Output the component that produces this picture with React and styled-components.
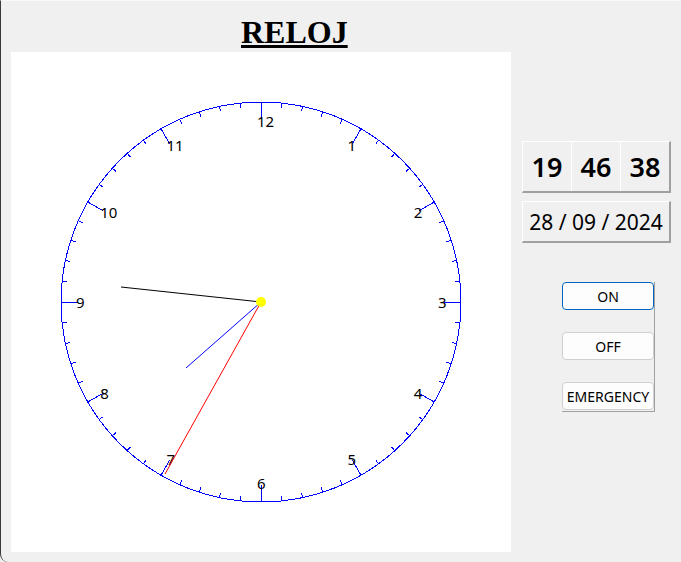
import React from 'react'
import styled, { createGlobalStyle } from 'styled-components'

const GlobalStyle = createGlobalStyle`
  html, body { margin: 0; padding: 0; background: #f0f0f0; }
  body { font-family: "Noto Sans", "Liberation Sans", sans-serif; }
`

const CX = 250
const CY = 250
const R = 200

const ticks = Array.from({ length: 60 }, (_, i) => {
  const a = (i * 6 * Math.PI) / 180
  const len = i % 5 === 0 ? 17 : 5
  const sx = Math.sin(a), cy = -Math.cos(a)
  return {
    x1: CX + R * sx, y1: CY + R * cy,
    x2: CX + (R - len) * sx, y2: CY + (R - len) * cy,
  }
})

const labels = Array.from({ length: 12 }, (_, i) => {
  const n = i + 1
  const a = (n * 30 * Math.PI) / 180
  return { n, x: CX + 181 * Math.sin(a) - 4, y: CY - 181 * Math.cos(a) }
})

// hands read off the reference, relative to centre
const hands = [
  { dx: -140, dy: -15, color: '#000000' },
  { dx: -75, dy: 66, color: '#0000ff' },
  { dx: -96, dy: 172, color: '#ff0000' },
]

const Clock = () => (
  <svg width="500" height="500" viewBox="0 0 500 500" shapeRendering="crispEdges">
    <circle cx={CX} cy={CY} r={R} fill="none" stroke="#0000ff" strokeWidth="1" />
    {ticks.map((t, i) => (
      <line key={i} x1={t.x1} y1={t.y1} x2={t.x2} y2={t.y2} stroke="#0000ff" strokeWidth="1" />
    ))}
    {labels.map(l => (
      <text key={l.n} x={l.x} y={l.y} dominantBaseline="central" fontSize="15"
        fontFamily='"Noto Sans", "Liberation Sans", sans-serif' fill="#000">{l.n}</text>
    ))}
    {hands.map((h, i) => (
      <line key={i} x1={CX} y1={CY} x2={CX + h.dx} y2={CY + h.dy} stroke={h.color} strokeWidth="1" shapeRendering="auto" />
    ))}
    <circle cx={CX} cy={CY} r="5" fill="#ffff00" shapeRendering="auto" />
  </svg>
)

const Window = styled.div`
  width: 681px; height: 562px; box-sizing: border-box;
  border-left: 1px solid #3a3a3a; border-top: 1px solid #f8f8f8;
  border-bottom-left-radius: 8px; border-bottom-right-radius: 8px;
  background: #f0f0f0; overflow: hidden;
  display: flex; padding-left: 10px;
`

const LeftCol = styled.div`
  display: flex; flex-direction: column; width: 500px;
`

const Title = styled.h1`
  margin: 0; box-sizing: border-box; height: 51px; padding: 13px 0 0 230px;
  font-family: "Liberation Serif", serif; font-weight: bold; font-size: 32px; line-height: 36px;
  text-decoration: underline; text-underline-offset: 2px; color: #000;
`

const Canvas = styled.div`
  width: 500px; height: 500px; background: #fff;
`

const Panel = styled.div`
  margin-left: 11px; padding-top: 140px; display: flex; flex-direction: column;
`

const LabelBox = styled.div`
  box-sizing: border-box; width: 149px; height: ${p => p.$h}px;
  border-top: 1px solid #fff; border-left: 1px solid #fff;
  border-bottom: 2px solid #a0a0a0; border-right: 2px solid #a0a0a0;
  display: flex; margin-bottom: ${p => p.$mb || 0}px;
`

const TimeCell = styled.div`
  flex: 1; display: flex; align-items: center; justify-content: center;
  font-size: 27px; font-weight: 600; color: #000;
  & + & { border-left: 1px solid #fff; }
`

const DateText = styled.div`
  flex: 1; display: flex; align-items: center; justify-content: center;
  font-size: 21px; color: #000;
`

const ButtonCol = styled.div`
  margin: 39px 0 0 40px; width: 93px; box-sizing: border-box;
  border-right: 1px solid #a0a0a0; border-bottom: 1px solid #a0a0a0;
  display: flex; flex-direction: column; gap: 22px; padding-bottom: 1px;
`

const Btn = styled.button`
  width: 92px; height: 28px; box-sizing: border-box; padding: 0;
  border: 1px solid ${p => (p.$focus ? '#0067c0' : '#d0d0d0')};
  border-radius: 4px; background: #fdfdfd; color: #000;
  font-family: "Noto Sans", "Liberation Sans", sans-serif; font-size: 14px;
`

export default function App() {
  return (
    <>
      <GlobalStyle />
      <Window>
        <LeftCol>
          <Title>RELOJ</Title>
          <Canvas><Clock /></Canvas>
        </LeftCol>
        <Panel>
          <LabelBox $h={52} $mb={8}>
            <TimeCell>19</TimeCell>
            <TimeCell>46</TimeCell>
            <TimeCell>38</TimeCell>
          </LabelBox>
          <LabelBox $h={42}>
            <DateText>28 / 09 / 2024</DateText>
          </LabelBox>
          <ButtonCol>
            <Btn $focus>ON</Btn>
            <Btn>OFF</Btn>
            <Btn>EMERGENCY</Btn>
          </ButtonCol>
        </Panel>
      </Window>
    </>
  )
}
